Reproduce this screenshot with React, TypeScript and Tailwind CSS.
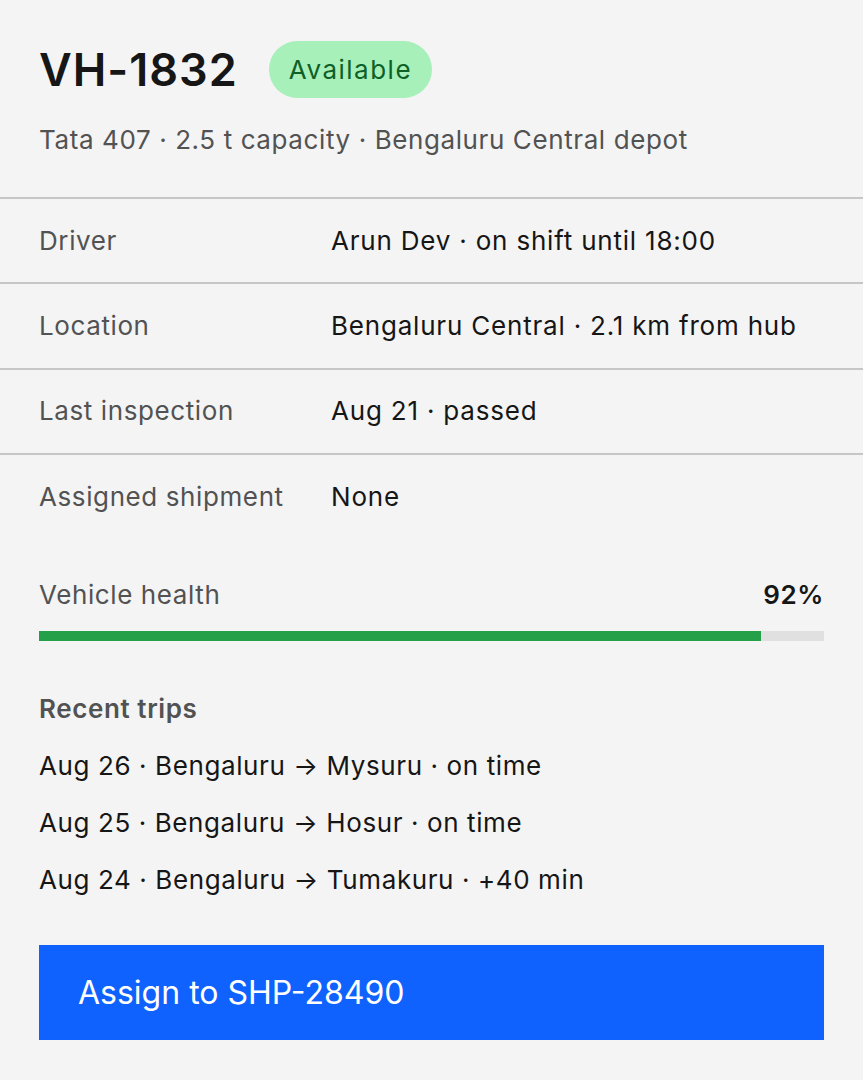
import React from "react";

const rows = [
  { label: "Driver", value: "Arun Dev · on shift until 18:00" },
  { label: "Location", value: "Bengaluru Central · 2.1 km from hub" },
  { label: "Last inspection", value: "Aug 21 · passed" },
  { label: "Assigned shipment", value: "None" },
];

const trips = [
  "Aug 26 · Bengaluru → Mysuru · on time",
  "Aug 25 · Bengaluru → Hosur · on time",
  "Aug 24 · Bengaluru → Tumakuru · +40 min",
];

export default function App() {
  return (
    <div
      className="min-h-screen bg-[#f4f4f4] text-[#161616] tracking-[0.6px]"
      style={{ fontFamily: "Inter, 'Noto Sans', 'Liberation Sans', sans-serif" }}
    >
      <div className="px-[39px] pt-[41px] pb-[39px]">
        <div className="flex h-[57px] items-center gap-[31px]">
          <h1 className="text-[45px] font-semibold leading-none tracking-[1px]">VH-1832</h1>
          <span className="flex h-[57px] items-center rounded-full bg-[#a7f0ba] px-[20px] text-[26px] tracking-[1.5px] text-[#0e6027]">
            Available
          </span>
        </div>
        <p className="mt-[24px] text-[26px] leading-[36px] text-[#525252]">
          Tata 407 · 2.5 t capacity · Bengaluru Central depot
        </p>
      </div>

      <div>
        {rows.map((r) => (
          <div
            key={r.label}
            className="flex h-[85.33px] items-center border-t-2 border-[#c6c6c6] px-[39px] text-[26px] leading-[36px]"
          >
            <div className="w-[292px] text-[#525252]">{r.label}</div>
            <div className="text-[#161616] tracking-[0.8px]">{r.value}</div>
          </div>
        ))}
      </div>

      <div className="px-[39px] pb-[39px]">
        <div className="mt-[39px] flex items-center justify-between text-[26px] leading-[36px]">
          <span className="text-[#525252]">Vehicle health</span>
          <span className="font-semibold text-[#161616]">92%</span>
        </div>
        <div className="mt-[18px] h-[10px] w-full bg-[#e0e0e0]">
          <div className="h-full bg-[#24a148]" style={{ width: "92%" }} />
        </div>

        <h2 className="mt-[50px] text-[26px] font-semibold leading-[36px] text-[#525252]">Recent trips</h2>
        <ul className="mt-[21px] flex flex-col gap-[21px] text-[26px] leading-[36px] text-[#161616]">
          {trips.map((t) => (
            <li key={t}>{t}</li>
          ))}
        </ul>

        <button className="mt-[47px] flex h-[95px] w-full items-center bg-[#0f62fe] px-[39px] text-left text-[32px] tracking-normal text-white">
          Assign to SHP-28490
        </button>
      </div>
    </div>
  );
}
